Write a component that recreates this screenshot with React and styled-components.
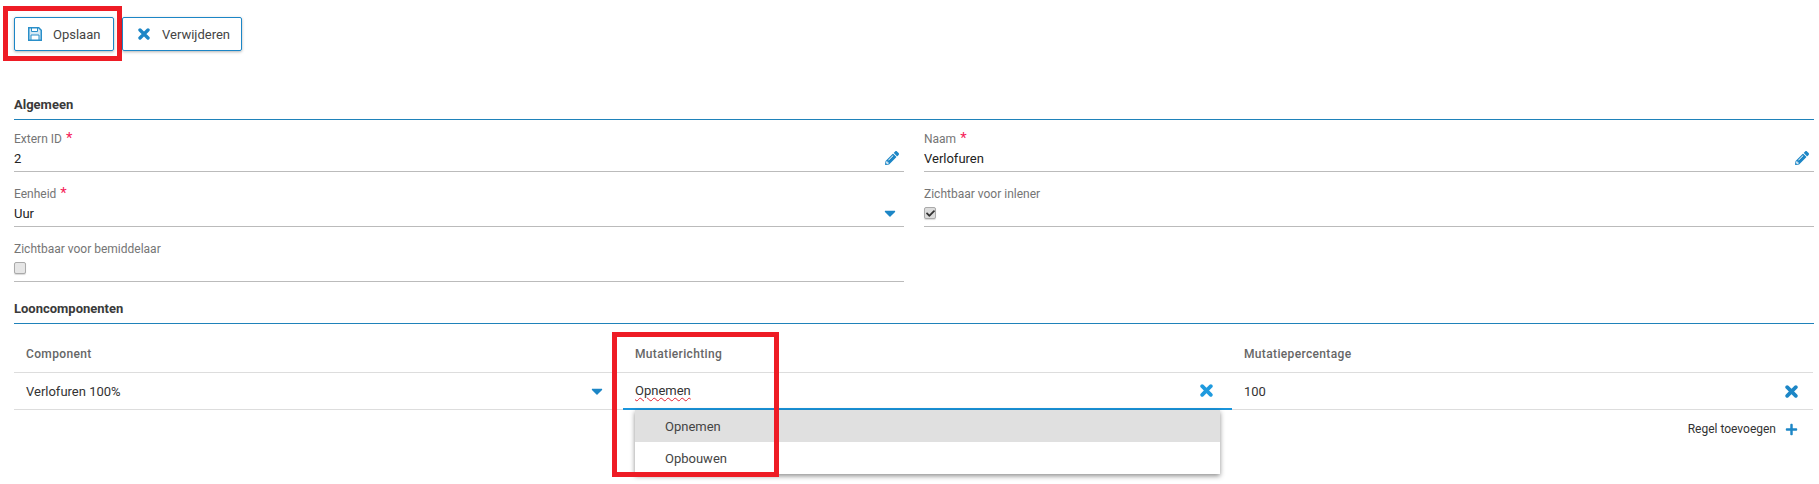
import React from "react";
import styled, { createGlobalStyle } from "styled-components";
import { FaPencilAlt, FaCaretDown, FaPlus, FaCheck } from "react-icons/fa";

const BLUE = "#1c86c6";

function SaveIcon() {
  return (
    <svg width="14" height="14" viewBox="0 0 14 14" fill="none">
      <path d="M.75.75h10l2.5 2.5v10H.75z" fill="#d5e9f5" stroke="#2a8fc9" strokeWidth="1.5" />
      <path d="M3.5 1h6v3.5h-6z" fill="#fff" stroke="#2a8fc9" />
      <path d="M3 8h8v5H3z" fill="#fff" stroke="#2a8fc9" />
    </svg>
  );
}

function CrossIcon({ color = BLUE, size = 12 }) {
  return (
    <svg width={size} height={size} viewBox="0 0 12 12">
      <path d="M2 2l8 8M10 2l-8 8" stroke={color} strokeWidth="3.4" strokeLinecap="round" />
    </svg>
  );
}

function Field({ label, required, value, icon }) {
  return (
    <FieldBox>
      <Label>
        {label}
        {required && <Star>*</Star>}
      </Label>
      <FieldRow>
        {value}
        {icon}
      </FieldRow>
    </FieldBox>
  );
}

function App() {
  return (
    <Page>
      <GlobalStyle />
      <Toolbar>
        <Button>
          <SaveIcon />
          <span>Opslaan</span>
          <Highlight />
        </Button>
        <Button $delete>
          <CrossIcon />
          <span>Verwijderen</span>
        </Button>
      </Toolbar>

      <SectionTitle>Algemeen</SectionTitle>
      <FieldGrid>
        <Field label="Extern ID" required value="2" icon={<PenIcon />} />
        <Field label="Naam" required value="Verlofuren" icon={<PenIcon />} />
        <Field label="Eenheid" required value="Uur" icon={<CaretIcon />} />
        <Field
          label="Zichtbaar voor inlener"
          value={
            <Checkbox $checked>
              <FaCheck size={9} color="#333" />
            </Checkbox>
          }
        />
        <Field label="Zichtbaar voor bemiddelaar" value={<Checkbox />} />
      </FieldGrid>

      <SectionTitle $second>Looncomponenten</SectionTitle>
      <Table>
        <HeadCell>Component</HeadCell>
        <HeadCell>Mutatierichting</HeadCell>
        <HeadCell>Mutatiepercentage</HeadCell>

        <Cell $right={17}>
          Verlofuren 100%
          <CaretIcon />
        </Cell>
        <Cell $active $right={19}>
          <Misspelled>Opnemen</Misspelled>
          <CrossIcon color="#1f9ade" size={13} />
          <Dropdown>
            <Option $selected>Opnemen</Option>
            <Option>Opbouwen</Option>
          </Dropdown>
          <ColumnHighlight />
        </Cell>
        <Cell $right={15}>
          100
          <CrossIcon size={13} />
        </Cell>
      </Table>
      <AddRow>
        Regel toevoegen
        <FaPlus size={13} color={BLUE} />
      </AddRow>
    </Page>
  );
}

export default App;

const GlobalStyle = createGlobalStyle`
  body {
    margin: 0;
    background: #fff;
    font-family: Roboto, "Liberation Sans", sans-serif;
    font-size: 13px;
    color: #333;
  }
`;

const Page = styled.div`
  width: 1819px;
  height: 484px;
  padding: 17px 5px 0 14px;
  box-sizing: border-box;
  overflow: hidden;
`;

const Toolbar = styled.div`
  display: flex;
  gap: 8px;
  height: 34px;
`;

const Button = styled.div`
  position: relative;
  width: ${(p) => (p.$delete ? "120px" : "100px")};
  height: 34px;
  box-sizing: border-box;
  display: flex;
  align-items: center;
  gap: ${(p) => (p.$delete ? "12px" : "11px")};
  padding-left: ${(p) => (p.$delete ? "15px" : "13px")};
  border: 1px solid ${BLUE};
  border-radius: 2px;
  box-shadow: 0 1px 3px rgba(0, 0, 0, 0.3);
  font-size: 13px;
  color: #444;
`;

const Highlight = styled.div`
  position: absolute;
  left: -12px;
  top: -12px;
  width: 119px;
  height: 55px;
  box-sizing: border-box;
  border: 5px solid #ee1c25;
`;

const SectionTitle = styled.div`
  margin-top: ${(p) => (p.$second ? "17px" : "44px")};
  height: 23px;
  padding-top: 1px;
  border-bottom: 1px solid #1f82ba;
  font-size: 13px;
  font-weight: 700;
  line-height: 18px;
  color: #3a3a3a;
`;

const FieldGrid = styled.div`
  display: grid;
  grid-template-columns: 890px 890px;
  column-gap: 20px;
`;

const FieldBox = styled.div`
  height: 55px;
  box-sizing: border-box;
  padding-top: 13px;
  border-bottom: 1px solid #bbb;
  &:nth-child(-n + 2) {
    height: 52px;
    padding-top: 10px;
  }
`;

const Label = styled.div`
  height: 18px;
  font-size: 12px;
  line-height: 18px;
  color: #757575;
`;

const Star = styled.span`
  margin-left: 4px;
  font-size: 15px;
  line-height: 14px;
  color: #f5225a;
`;

const FieldRow = styled.div`
  display: flex;
  align-items: center;
  justify-content: space-between;
  height: 20px;
  padding-right: 5px;
  font-size: 13px;
  color: #222;
`;

const PenIcon = styled(FaPencilAlt).attrs({ size: 14, color: BLUE })``;

const CaretIcon = styled(FaCaretDown).attrs({ size: 18, color: BLUE })``;

const Checkbox = styled.div`
  width: 10px;
  height: 10px;
  display: flex;
  align-items: center;
  justify-content: center;
  border: 1px solid #aaa;
  border-radius: 2px;
  background: ${(p) => (p.$checked ? "#dcdcdc" : "#e6e6e6")};
  box-shadow: 0 1px 1px rgba(0, 0, 0, 0.15);
`;

const Table = styled.div`
  display: grid;
  grid-template-columns: 609px 609px 581px;
`;

const HeadCell = styled.div`
  height: 49px;
  box-sizing: border-box;
  padding: 22px 12px 0 12px;
  border-bottom: 1px solid #ddd;
  font-size: 12px;
  font-weight: 500;
  letter-spacing: 0.35px;
  line-height: 16px;
  color: #666;
`;

const Cell = styled.div`
  position: relative;
  height: 37px;
  box-sizing: border-box;
  display: flex;
  align-items: center;
  justify-content: space-between;
  padding: 0 ${(p) => p.$right}px 0 12px;
  border-bottom: ${(p) => (p.$active ? "2px solid #1a95dc" : "1px solid #ddd")};
  font-size: 13px;
  color: #333;
`;

const Misspelled = styled.span`
  text-decoration: underline wavy #e5202e 1px;
  text-underline-offset: 2px;
`;

const Dropdown = styled.div`
  position: absolute;
  left: 12px;
  top: 37px;
  width: 585px;
  background: #fff;
  box-shadow: 0 2px 5px rgba(0, 0, 0, 0.45);
`;

const Option = styled.div`
  height: 32px;
  padding-left: 30px;
  line-height: 34px;
  font-size: 13px;
  color: #444;
  background: ${(p) => (p.$selected ? "#e0e0e0" : "#fff")};
`;

const ColumnHighlight = styled.div`
  position: absolute;
  left: -11px;
  top: -41px;
  width: 167px;
  height: 145px;
  box-sizing: border-box;
  border: 5px solid #ee1c25;
`;

const AddRow = styled.div`
  display: flex;
  justify-content: flex-end;
  align-items: center;
  gap: 9px;
  height: 18px;
  margin-top: 10px;
  padding-right: 16px;
  font-size: 12px;
  color: #333;
`;
